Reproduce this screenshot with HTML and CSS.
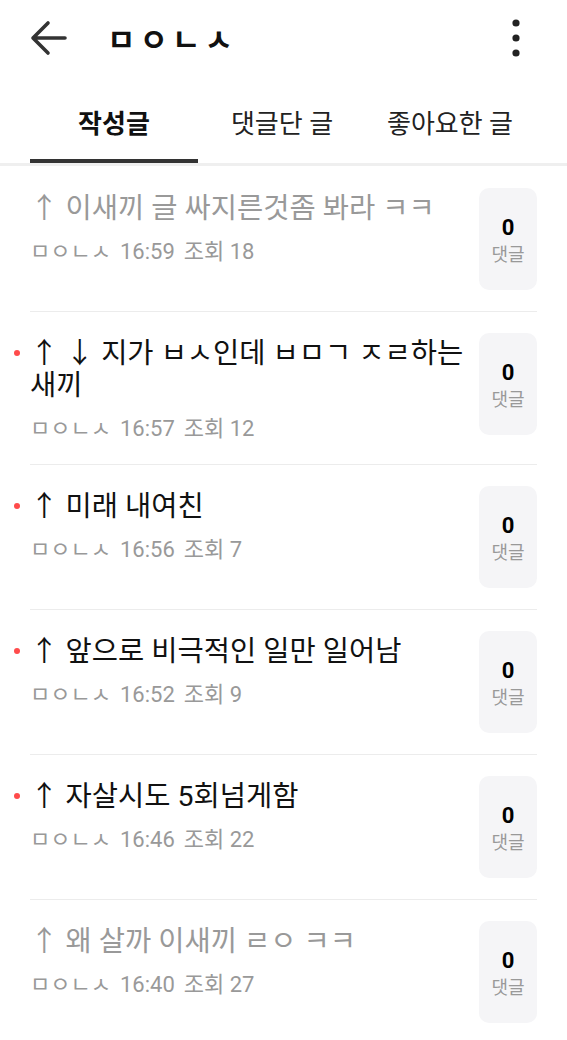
FILE: index.html
```html
<!DOCTYPE html>
<html lang="ko">
<head>
    <meta charset="UTF-8">
    <meta name="viewport" content="width=device-width, initial-scale=1.0">
    <title>ㅁㅇㄴㅅ</title>
    <link rel="stylesheet" href="styles.css">
</head>
<body>

<!-- Верхняя панель -->
<header class="topbar">
    <svg class="back-icon" viewBox="0 0 40 40" width="40" height="40">
        <path d="M36 20H4 M19 5L4 20L19 35" fill="none" stroke="#333" stroke-width="3.6" stroke-linecap="round" stroke-linejoin="round"/>
    </svg>
    <h1 class="topbar-title">ㅁㅇㄴㅅ</h1>
    <svg class="more-icon" viewBox="0 0 24 40" width="24" height="40">
        <circle cx="12" cy="5" r="3.6" fill="#222"/>
        <circle cx="12" cy="20" r="3.6" fill="#222"/>
        <circle cx="12" cy="35" r="3.6" fill="#222"/>
    </svg>
</header>

<!-- Вкладки -->
<nav class="tabs">
    <div class="tab active">작성글</div>
    <div class="tab">댓글단 글</div>
    <div class="tab">좋아요한 글</div>
</nav>

<!-- Список постов -->
<ul class="post-list">
    <li class="post read">
        <div class="post-body">
            <div class="post-title">↑ 이새끼 글 싸지른것좀 봐라 ㅋㅋ</div>
            <div class="post-meta"><span>ㅁㅇㄴㅅ</span><span>16:59</span><span>조회 18</span></div>
        </div>
        <div class="comment-box"><b>0</b><span>댓글</span></div>
    </li>
    <li class="post">
        <div class="post-body">
            <i class="new-dot"></i>
            <div class="post-title">↑ ↓ 지가 ㅂㅅ인데 ㅂㅁㄱ ㅈㄹ하는 새끼</div>
            <div class="post-meta"><span>ㅁㅇㄴㅅ</span><span>16:57</span><span>조회 12</span></div>
        </div>
        <div class="comment-box"><b>0</b><span>댓글</span></div>
    </li>
    <li class="post">
        <div class="post-body">
            <i class="new-dot"></i>
            <div class="post-title">↑ 미래 내여친</div>
            <div class="post-meta"><span>ㅁㅇㄴㅅ</span><span>16:56</span><span>조회 7</span></div>
        </div>
        <div class="comment-box"><b>0</b><span>댓글</span></div>
    </li>
    <li class="post">
        <div class="post-body">
            <i class="new-dot"></i>
            <div class="post-title">↑ 앞으로 비극적인 일만 일어남</div>
            <div class="post-meta"><span>ㅁㅇㄴㅅ</span><span>16:52</span><span>조회 9</span></div>
        </div>
        <div class="comment-box"><b>0</b><span>댓글</span></div>
    </li>
    <li class="post">
        <div class="post-body">
            <i class="new-dot"></i>
            <div class="post-title">↑ 자살시도 5회넘게함</div>
            <div class="post-meta"><span>ㅁㅇㄴㅅ</span><span>16:46</span><span>조회 22</span></div>
        </div>
        <div class="comment-box"><b>0</b><span>댓글</span></div>
    </li>
    <li class="post read">
        <div class="post-body">
            <div class="post-title">↑ 왜 살까 이새끼 ㄹㅇ ㅋㅋ</div>
            <div class="post-meta"><span>ㅁㅇㄴㅅ</span><span>16:40</span><span>조회 27</span></div>
        </div>
        <div class="comment-box"><b>0</b><span>댓글</span></div>
    </li>
</ul>

</body>
</html>
```

FILE: styles.css
```css
body {
    margin: 0;
    font-family: Roboto, "Noto Sans CJK KR", sans-serif;
    background-color: #fff;
    color: #111;
    overflow: hidden;
}

/* Верхняя панель */
.topbar {
    display: flex;
    align-items: center;
    height: 75px;
    padding: 0 39px 0 29px;
}
.back-icon { flex: none; }
.topbar-title {
    flex: 1;
    margin: 0 0 0 38px;
    font-size: 31px;
    font-weight: 700;
    letter-spacing: 4px;
}
.more-icon { flex: none; }

/* Вкладки */
.tabs {
    display: grid;
    grid-template-columns: repeat(3, 168px);
    padding: 0 30px;
    border-bottom: 3px solid #efefef;
}
.tab {
    padding-top: 14px;
    line-height: 70px;
    text-align: center;
    font-size: 26px;
    color: #222;
    border-bottom: 4px solid transparent;
}
.tab.active {
    font-weight: 700;
    color: #111;
    border-bottom-color: #333;
}

/* Список постов */
.post-list {
    list-style: none;
    margin: 0;
    padding: 1px 30px 0;
}
.post {
    display: flex;
    gap: 14px;
    padding: 21px 0;
    border-bottom: 1px solid #ececec;
}
.post-body {
    position: relative;
    flex: 1;
    padding-top: 5px;
}
.post-title {
    font-size: 28.5px;
    line-height: 32px;
    color: #111;
    word-break: keep-all;
}
.post.read .post-title { color: #999; }
.post-meta {
    display: flex;
    gap: 9px;
    margin-top: 13px;
    font-size: 22px;
    line-height: 28px;
    color: #999;
}
.new-dot {
    position: absolute;
    left: -16px;
    top: 17px;
    width: 6px;
    height: 6px;
    border-radius: 50%;
    background-color: #ff4b4b;
}
.comment-box {
    flex: none;
    display: flex;
    flex-direction: column;
    align-items: center;
    justify-content: center;
    width: 58px;
    height: 102px;
    border-radius: 10px;
    background-color: #f5f5f7;
}
.comment-box b {
    font-size: 22px;
    line-height: 28px;
    color: #000;
    margin-top: 4px;
}
.comment-box span {
    font-size: 18px;
    line-height: 26px;
    color: #999;
}
```
